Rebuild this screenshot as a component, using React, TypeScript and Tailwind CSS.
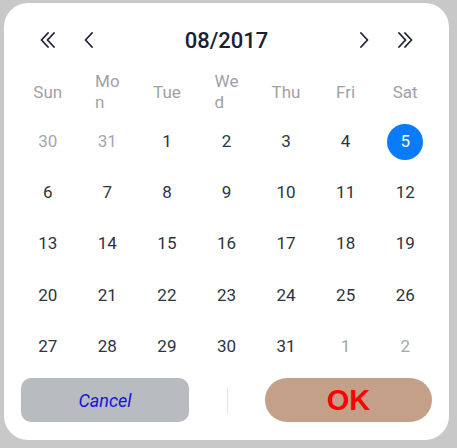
import React from "react"

const weekdays: React.ReactNode[] = [
  "Sun",
  <>Mo<br />n</>,
  "Tue",
  <>We<br />d</>,
  "Thu",
  "Fri",
  "Sat",
]

type Day = { d: number; muted?: boolean; selected?: boolean }

const weeks: Day[][] = [
  [{ d: 30, muted: true }, { d: 31, muted: true }, { d: 1 }, { d: 2 }, { d: 3 }, { d: 4 }, { d: 5, selected: true }],
  [6, 7, 8, 9, 10, 11, 12].map((d) => ({ d })),
  [13, 14, 15, 16, 17, 18, 19].map((d) => ({ d })),
  [20, 21, 22, 23, 24, 25, 26].map((d) => ({ d })),
  [{ d: 27 }, { d: 28 }, { d: 29 }, { d: 30 }, { d: 31 }, { d: 1, muted: true }, { d: 2, muted: true }],
]

const Chevron = ({ dir, double }: { dir: "left" | "right"; double?: boolean }) => {
  const single = dir === "left" ? "M8 1 L1.5 8 L8 15" : "M2 1 L8.5 8 L2 15"
  const second = dir === "left" ? "M14 1 L7.5 8 L14 15" : "M8 1 L14.5 8 L8 15"
  return (
    <svg
      width={double ? 16 : 10}
      height={16}
      viewBox={double ? "0 0 16 16" : "0 0 10 16"}
      fill="none"
      stroke="#1d2330"
      strokeWidth={1.8}
      strokeLinecap="round"
      strokeLinejoin="round"
    >
      <path d={single} />
      {double && <path d={second} />}
    </svg>
  )
}

export default function App() {
  return (
    <div className="w-[457px] h-[448px] bg-[#c8c8c8] pt-[3px] pl-[4px]" style={{ fontFamily: "Roboto, 'Noto Sans', sans-serif" }}>
      <div className="w-[445px] h-[437px] bg-white rounded-[24px] pt-[15px] flex flex-col">
        <div className="flex items-center h-[44px] px-[14px]">
          <div className="w-[60px] flex justify-center">
            <Chevron dir="left" double />
          </div>
          <div className="w-[22px] flex justify-center">
            <Chevron dir="left" />
          </div>
          <div className="flex-1 text-center text-[22px] font-medium text-[#1a2130]">08/2017</div>
          <div className="w-[22px] flex justify-center">
            <Chevron dir="right" />
          </div>
          <div className="w-[60px] flex justify-center">
            <Chevron dir="right" double />
          </div>
        </div>

        <div className="grid grid-cols-7 px-[14px] mt-[6px] h-[48px] items-center">
          {weekdays.map((w, i) => (
            <div key={i} className="flex justify-center">
              <span className="inline-block text-left text-[17px] leading-[21px] text-[#9fa1a5]">{w}</span>
            </div>
          ))}
        </div>

        <div className="flex flex-col px-[14px]">
          {weeks.map((week, i) => (
            <div key={i} className="grid grid-cols-7 h-[51.25px] items-center">
              {week.map((day, j) => (
                <div key={j} className="flex justify-center">
                  {day.selected ? (
                    <span className="w-[36px] h-[36px] rounded-full bg-[#0a7cfb] text-white text-[17px] flex items-center justify-center">
                      {day.d}
                    </span>
                  ) : (
                    <span className={`text-[17px] ${day.muted ? "text-[#a3a7ad]" : "text-[#2e343e]"}`}>{day.d}</span>
                  )}
                </div>
              ))}
            </div>
          ))}
        </div>

        <div className="flex items-center px-[17px] mt-[6px]">
          <button className="w-[168px] h-[44px] rounded-[10px] bg-[#b8bbc0] text-[18px] italic text-[#1414d8]">
            Cancel
          </button>
          <div className="flex-1 flex justify-center">
            <div className="w-px h-[27px] bg-[#e3e5e8]" />
          </div>
          <button
            className="w-[167px] h-[44px] rounded-full bg-[#c4a088] text-[29px] font-bold text-[#ff0000]"
            style={{ fontFamily: "'Liberation Sans', Arial, sans-serif" }}
          >
            OK
          </button>
        </div>
      </div>
    </div>
  )
}
